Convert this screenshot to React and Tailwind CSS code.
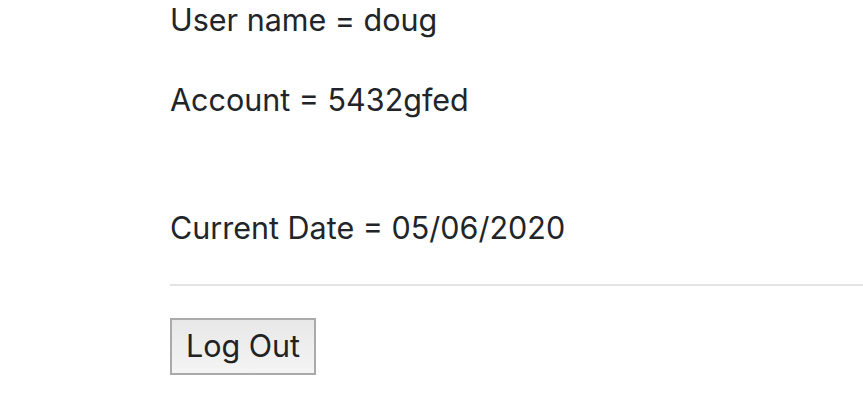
export default function App() {
  return (
    <div className="w-[863px] h-[400px] bg-white overflow-hidden text-[#212529]" style={{ fontFamily: 'Inter, "Noto Sans", sans-serif' }}>
      <div className="pl-[170px] text-[30.5px] leading-[40px]">
        <p className="mt-[0px]">User name = doug</p>
        <p className="mt-[40px]">Account = 5432gfed</p>
        <p className="mt-[88px]">Current Date = 05/06/2020</p>
        <hr className="mt-[36px] border-0 h-[2px] bg-[#e3e3e3]" />
        <button className="mt-[32px] w-[146px] h-[57px] border-2 border-[#aaaaaa] bg-gradient-to-b from-[#e8e8e8] to-[#f4f4f4] text-[30.5px] text-[#222] leading-none">Log Out</button>
      </div>
    </div>
  );
}
